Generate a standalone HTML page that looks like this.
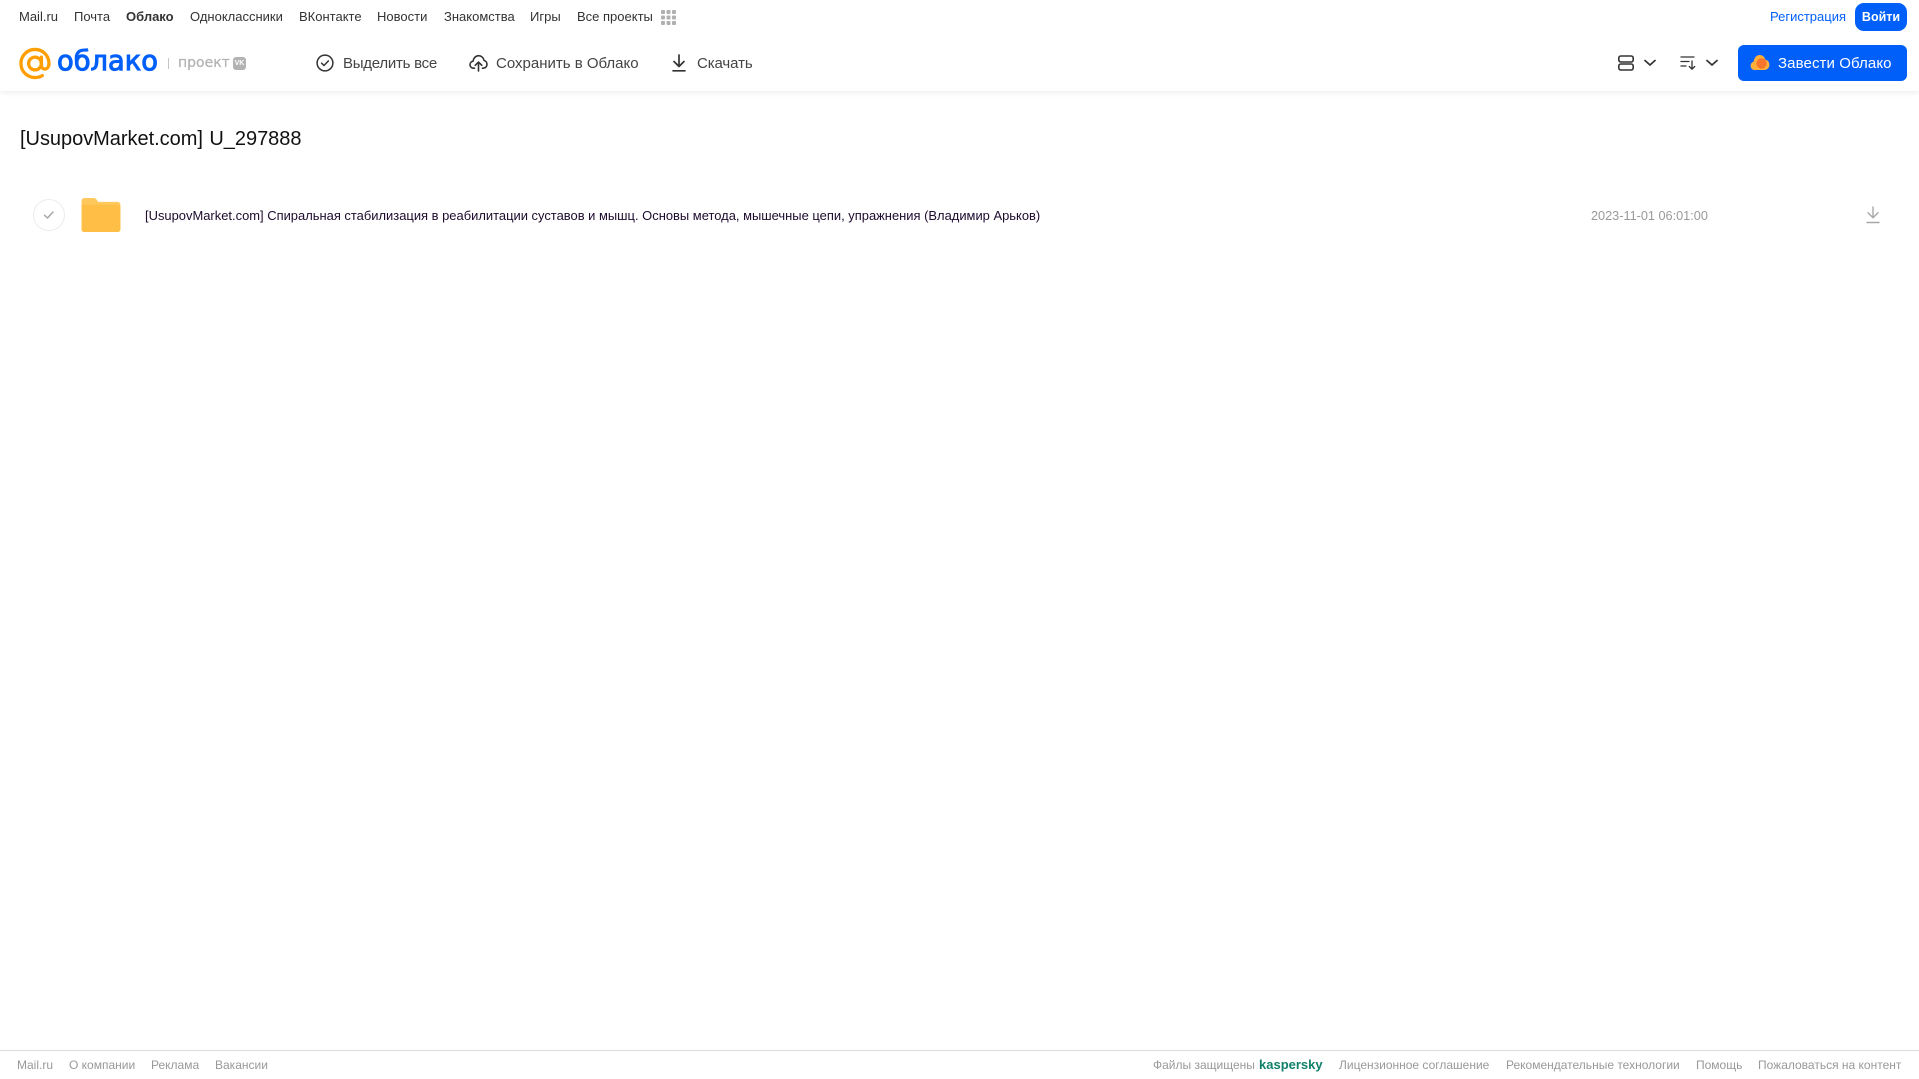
<!DOCTYPE html>
<html lang="ru">
<head>
<meta charset="utf-8">
<title>Облако</title>
<style>
html,body{margin:0;padding:0;background:#fff;}
body{width:1919px;height:1079px;position:relative;overflow:hidden;font-family:"Liberation Sans",sans-serif;}
.t{position:absolute;white-space:nowrap;line-height:16px;}
.nav{top:9px;font-size:13px;color:#333;}
.act{top:55px;font-size:15px;color:#444;line-height:18px;}
.ft{top:1057px;font-size:12px;color:#999;}
svg{position:absolute;display:block;}
</style>
</head>
<body>
<div style="position:absolute;left:0;top:0;width:1919px;height:91px;background:#fff;box-shadow:0 1px 6px rgba(0,0,0,.09);"></div>

<span class="t nav" style="left:19px">Mail.ru</span>
<span class="t nav" style="left:74px">Почта</span>
<span class="t nav" style="left:126px;font-weight:bold">Облако</span>
<span class="t nav" style="left:190px">Одноклассники</span>
<span class="t nav" style="left:299px">ВКонтакте</span>
<span class="t nav" style="left:377px">Новости</span>
<span class="t nav" style="left:444px">Знакомства</span>
<span class="t nav" style="left:530px">Игры</span>
<span class="t nav" style="left:577px">Все проекты</span>
<svg style="left:661px;top:10px" width="15" height="15" viewBox="0 0 15 15" fill="#b0b0b0">
<rect x="0" y="0" width="4" height="4" rx="1"/><rect x="5.5" y="0" width="4" height="4" rx="1"/><rect x="11" y="0" width="4" height="4" rx="1"/>
<rect x="0" y="5.5" width="4" height="4" rx="1"/><rect x="5.5" y="5.5" width="4" height="4" rx="1"/><rect x="11" y="5.5" width="4" height="4" rx="1"/>
<rect x="0" y="11" width="4" height="4" rx="1"/><rect x="5.5" y="11" width="4" height="4" rx="1"/><rect x="11" y="11" width="4" height="4" rx="1"/>
</svg>

<span class="t" style="left:1770px;top:9px;font-size:13px;color:#005ff9">Регистрация</span>
<div class="t" style="left:1855px;top:3px;width:52px;height:28px;line-height:28px;background:#005ff9;border-radius:9px;color:#fff;font-size:12.5px;font-weight:bold;text-align:center;">Войти</div>

<svg style="left:19px;top:47px" width="32" height="33" viewBox="0 0 33 33" fill="none" stroke="#ff9e00" stroke-width="3.4">
<circle cx="16.5" cy="16.5" r="6.6"/>
<path d="M23.1 10v8.2c0 5.6 7.8 5.6 7.8-1.7C30.9 8.400 24.500 2 16.500 2S2 8.400 2 16.500 8.400 31 16.500 31c2.900 0 5.400-.7 7.500-2" stroke-linecap="round"/>
</svg>
<span class="t" style="left:57px;top:44px;font-family:'DejaVu Sans','Liberation Sans',sans-serif;font-size:27.300px;line-height:36px;color:#005ff9;-webkit-text-stroke:1px #005ff9;">облако</span>
<div style="position:absolute;left:168px;top:58px;width:1px;height:11px;background:#c4c4c4"></div>
<span class="t" style="left:178px;top:54px;font-family:'DejaVu Sans','Liberation Sans',sans-serif;font-size:14px;line-height:18px;color:#b3b3b3;-webkit-text-stroke:.25px #b3b3b3;">проект</span>
<div class="t" style="left:233px;top:57px;width:13px;height:13px;background:#b3b3b3;border-radius:3px;color:#fff;font-size:7px;line-height:13px;font-weight:bold;text-align:center;">VK</div>

<svg style="left:316px;top:54px" width="18" height="18" viewBox="0 0 18 18" fill="none" stroke="#333" stroke-width="1.5" stroke-linecap="round" stroke-linejoin="round">
<circle cx="9" cy="9" r="7.9"/><path d="M5.6 9.2l2.4 2.3 4.400-4.600"/>
</svg>
<span class="t act" style="left:343px;letter-spacing:-.25px">Выделить все</span>

<svg style="left:469px;top:54px" width="19" height="18" viewBox="0 0 19 18" fill="none" stroke="#333" stroke-width="1.6" stroke-linecap="round" stroke-linejoin="round">
<path d="M5.500 14.200H4.600C2.600 14.200 1 12.600 1 10.700c0-1.800 1.300-3.200 3-3.500C4.500 4 6.800 1.700 9.600 1.700c2.700 0 5 2.100 5.500 4.800 1.700.4 2.900 2 2.900 3.800 0 2.100-1.600 3.900-3.700 3.900h-.8"/>
<path d="M9.500 17V8.500M6.200 11.300l3.300-3.200 3.300 3.200"/>
</svg>
<span class="t act" style="left:496px">Сохранить в Облако</span>

<svg style="left:671px;top:54px" width="16" height="18" viewBox="0 0 16 18" fill="none" stroke="#333" stroke-width="1.7" stroke-linecap="round" stroke-linejoin="round">
<path d="M8 1v11M3 7.500L8 12.500l5-5M2 16.800h12"/>
</svg>
<span class="t act" style="left:697px;letter-spacing:-.1px">Скачать</span>

<svg style="left:1618px;top:55px" width="16" height="16" viewBox="0 0 16 16" fill="none" stroke="#333" stroke-width="1.6">
<rect x=".8" y="1" width="14.400" height="6" rx="2"/><rect x=".8" y="9" width="14.400" height="6" rx="2"/>
</svg>
<svg style="left:1644px;top:59px" width="12" height="8" viewBox="0 0 12 8" fill="none" stroke="#333" stroke-width="1.7" stroke-linecap="round" stroke-linejoin="round"><path d="M1 1.500l5 4.500 5-4.500"/></svg>
<svg style="left:1680px;top:55px" width="17" height="16" viewBox="0 0 17 16" fill="none" stroke="#333" stroke-width="1.3" stroke-linecap="round" stroke-linejoin="round">
<path d="M1 2h13M1 6.500h8M1 11h5M12 6v8M9.300 11.500l2.700 2.700 2.700-2.700"/>
</svg>
<svg style="left:1706px;top:59px" width="12" height="8" viewBox="0 0 12 8" fill="none" stroke="#333" stroke-width="1.7" stroke-linecap="round" stroke-linejoin="round"><path d="M1 1.500l5 4.500 5-4.500"/></svg>

<div style="position:absolute;left:1738px;top:45px;width:169px;height:36px;background:#005ff9;border-radius:6px;"></div>
<svg style="left:1750px;top:54px" width="20" height="17" viewBox="0 0 20 17">
<path d="M5 16C2 16 .6 13.800.6 11.700c0-2 1.300-3.600 3-4C4.200 3.500 6.800 1 9.600 1c2.900 0 5.100 2 5.700 4.800 2.500.3 4.100 2.500 4.100 5 0 2.800-2 5.200-5 5.200z" fill="#ffb03b"/>
<circle cx="11.500" cy="9.500" r="5.200" fill="#f9752b"/>
</svg>
<span class="t" style="left:1778px;top:55px;font-size:15px;line-height:18px;color:#fff;letter-spacing:.1px;">Завести Облако</span>

<span class="t" style="left:20px;top:127px;font-size:20px;line-height:24px;color:#111;letter-spacing:-.03px;word-spacing:1px;">[UsupovMarket.com] U_297888</span>

<div style="position:absolute;left:33px;top:199px;width:30px;height:30px;border:1px solid #ececec;border-radius:50%;"></div>
<svg style="left:43px;top:210px" width="12" height="10" viewBox="0 0 12 10" fill="none" stroke="#a3a3a3" stroke-width="1.400" stroke-linecap="round" stroke-linejoin="round"><path d="M1.500 5.200l3 2.800 5.500-6"/></svg>
<svg style="left:81px;top:198px" width="40" height="34" viewBox="0 0 40 35">
<path d="M0 3C0 1.300 1.300 0 3 0h9.500c1.200 0 2 .5 2.800 1.400L17 4h20c1.700 0 3 1.300 3 3v25c0 1.700-1.300 3-3 3H3c-1.700 0-3-1.300-3-3z" fill="#ffc85c"/>
<path d="M0 7h37c1.700 0 3 1.300 3 3v22c0 1.700-1.300 3-3 3H3c-1.700 0-3-1.300-3-3z" fill="#ffbe45"/>
</svg>
<span class="t" style="left:145px;top:208px;font-size:12.940px;color:#1d0a2d;">[UsupovMarket.com] Спиральная стабилизация в реабилитации суставов и мышц. Основы метода, мышечные цепи, упражнения (Владимир Арьков)</span>
<span class="t" style="left:1591px;top:208px;font-size:12.700px;color:#999;">2023-11-01 06:01:00</span>
<svg style="left:1866px;top:206px" width="14" height="18" viewBox="0 0 14 18" fill="none" stroke="#a8a8a8" stroke-width="1.400" stroke-linecap="round" stroke-linejoin="round"><path d="M7 1v10.500M2 6.800l5 5 5-5M1 16.500h12"/></svg>

<div style="position:absolute;left:0;top:1050px;width:1919px;height:1px;background:#dcdcdc;"></div>
<span class="t ft" style="left:17px">Mail.ru</span>
<span class="t ft" style="left:69px">О компании</span>
<span class="t ft" style="left:151px">Реклама</span>
<span class="t ft" style="left:215px">Вакансии</span>
<span class="t ft" style="left:1153px">Файлы защищены</span>
<span class="t" style="left:1259px;top:1057px;font-size:13px;font-weight:bold;color:#10806a;">kaspersky</span>
<span class="t ft" style="left:1339px">Лицензионное соглашение</span>
<span class="t ft" style="left:1506px">Рекомендательные технологии</span>
<span class="t ft" style="left:1696px">Помощь</span>
<span class="t ft" style="left:1758px">Пожаловаться на контент</span>
</body>
</html>
